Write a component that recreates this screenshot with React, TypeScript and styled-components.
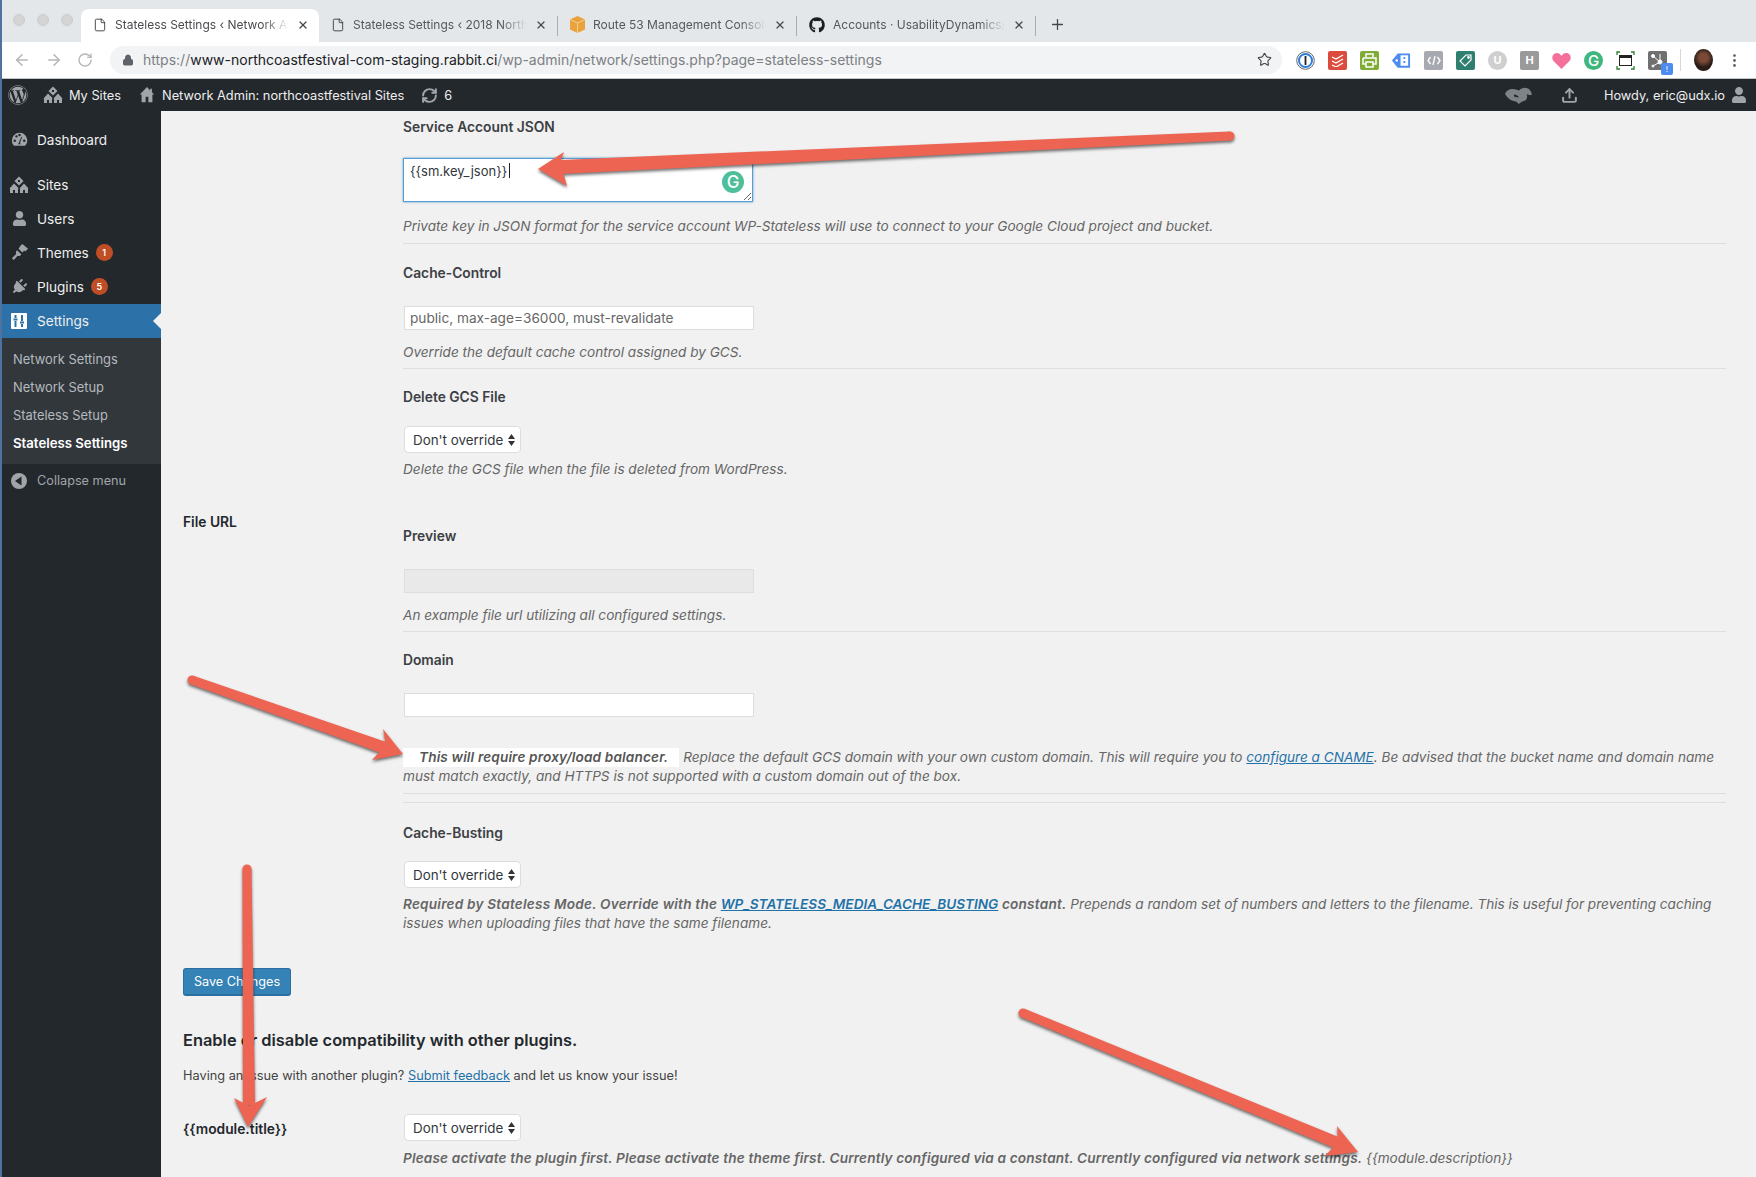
import React from 'react';
import styled, { createGlobalStyle } from 'styled-components';
import { FaWordpress, FaGithub, FaUser, FaPlug } from 'react-icons/fa';
import { ArrowLeft, ArrowRight, RotateCw, Lock, Star, X, Plus, File, RefreshCw, Upload, EllipsisVertical } from 'lucide-react';

const GlobalStyle = createGlobalStyle`
  html, body {
    margin: 0;
    padding: 0;
    background: #f1f1f1;
  }
  body {
    font-family: Inter, "Liberation Sans", sans-serif;
    font-size: 13px;
    color: #444;
  }
  * {
    box-sizing: border-box;
  }
`;

const Page = styled.div`
  position: relative;
  width: 1756px;
  height: 1177px;
  overflow: hidden;
  display: flex;
  flex-direction: column;
  border-left: 2px solid #4f73a0;
`;

/* browser chrome */

const TabStrip = styled.div`
  height: 42px;
  flex: none;
  display: flex;
  align-items: flex-end;
  padding-left: 79px;
  background: #e4e7ea;
  position: relative;
`;

const Lights = styled.div`
  position: absolute;
  left: 11px;
  top: 14px;
  display: flex;
  gap: 12px;
`;

const Light = styled.span`
  width: 12px;
  height: 12px;
  border-radius: 50%;
  background: #d4d4d4;
  border: 1px solid #cbcbcb;
`;

const Tab = styled.div<{ $active?: boolean }>`
  width: 238px;
  height: 33px;
  display: flex;
  align-items: center;
  gap: 8px;
  padding: 0 10px 2px 12px;
  font-size: 12px;
  color: ${(p) => (p.$active ? '#4a4c50' : '#55585c')};
  background: ${(p) => (p.$active ? '#fff' : 'transparent')};
  border-radius: 8px 8px 0 0;
  position: relative;
  svg {
    flex: none;
  }
`;

const TabTitle = styled.span`
  flex: 1;
  overflow: hidden;
  white-space: nowrap;
  -webkit-mask-image: linear-gradient(to right, #000 85%, transparent);
  mask-image: linear-gradient(to right, #000 85%, transparent);
`;

const TabDivider = styled.span`
  width: 1px;
  height: 20px;
  background: #a9acb0;
  align-self: center;
  margin-top: 9px;
  flex: none;
`;

const NewTab = styled.div`
  height: 33px;
  display: flex;
  align-items: center;
  margin-left: 13px;
  padding-bottom: 2px;
  color: #45484c;
`;

const Toolbar = styled.div`
  height: 37px;
  flex: none;
  display: flex;
  align-items: center;
  background: #fff;
  border-bottom: 1px solid #c4c6c8;
  padding-left: 11px;
`;

const NavButton = styled.span<{ $gap?: number }>`
  display: flex;
  width: 18px;
  margin-right: ${(p) => p.$gap ?? 14}px;
  color: #b4b6b9;
`;

const Omnibox = styled.div`
  width: 1172px;
  height: 28px;
  border-radius: 14px;
  background: #f1f3f4;
  display: flex;
  align-items: center;
  padding: 0 10px 1px 12px;
  font-size: 14px;
  color: #7d8084;
`;

const UrlText = styled.span`
  margin-left: 9px;
  flex: 1;
  white-space: nowrap;
`;

const UrlHost = styled.span`
  color: #202124;
`;

const Extensions = styled.div`
  display: flex;
  align-items: center;
  gap: 13px;
  margin-left: 14px;
  position: relative;
`;

const Ext = styled.span<{ $bg?: string; $round?: boolean; $color?: string; $big?: boolean }>`
  width: 19px;
  height: 19px;
  display: flex;
  align-items: center;
  justify-content: center;
  flex: none;
  border-radius: ${(p) => (p.$round ? '50%' : '2px')};
  background: ${(p) => p.$bg ?? 'transparent'};
  color: ${(p) => p.$color ?? '#fff'};
  font-size: ${(p) => (p.$big ? 15 : 11)}px;
  font-weight: ${(p) => (p.$big ? 500 : 700)};
  position: relative;
`;

const ExtBadge = styled.span`
  position: absolute;
  right: -6px;
  bottom: -5px;
  width: 12px;
  height: 12px;
  border-radius: 2px;
  background: #4d8bf0;
  color: #fff;
  font-size: 8px;
  font-weight: 400;
  text-align: center;
  line-height: 12px;
`;

const ToolDivider = styled.span`
  width: 1px;
  height: 22px;
  background: #d5d7d9;
`;

const Avatar = styled.span`
  width: 19px;
  height: 22px;
  border-radius: 50%;
  background: radial-gradient(circle at 50% 40%, #7a4a36 0 26%, #2a1c17 58%);
  flex: none;
`;

const MoreMenu = styled(EllipsisVertical)`
  color: #5f6368;
`;

/* admin bar */

const AdminBar = styled.div`
  height: 32px;
  flex: none;
  background: #23282d;
  color: #eee;
  display: flex;
  align-items: center;
  font-size: 12.800px;
  padding-left: 6px;
`;

const BarItem = styled.span<{ $gap?: number }>`
  display: flex;
  align-items: center;
  gap: 6px;
  margin-right: ${(p) => p.$gap ?? 0}px;
  color: #eee;
  white-space: nowrap;
  svg {
    color: #a0a5aa;
    flex: none;
  }
`;

const BarSpacer = styled.span`
  flex: 1;
`;

/* sidebar */

const Body = styled.div`
  flex: 1;
  display: flex;
  min-height: 0;
`;

const Sidebar = styled.nav`
  width: 159px;
  flex: none;
  background: #23282d;
  padding-top: 12px;
`;

const MenuItem = styled.div<{ $active?: boolean; $gapAfter?: boolean; $muted?: boolean }>`
  height: 34px;
  display: flex;
  align-items: center;
  padding: 0 0 1px 7px;
  gap: 8px;
  position: relative;
  color: ${(p) => (p.$muted ? '#a0a5aa' : '#eee')};
  background: ${(p) => (p.$active ? '#2c72a8' : 'transparent')};
  margin-bottom: ${(p) => (p.$gapAfter ? 11 : 0)}px;
  font-size: ${(p) => (p.$muted ? 12.7 : 13.6)}px;
  svg {
    color: ${(p) => (p.$active ? '#fff' : '#a0a5aa')};
  }
  ${(p) =>
    p.$active &&
    `&::after {
      content: '';
      position: absolute;
      right: 0;
      top: 9px;
      border: 8px solid transparent;
      border-right-color: #f1f1f1;
      border-left-width: 0;
    }`}
`;

const MenuIcon = styled.span`
  width: 20px;
  height: 20px;
  display: flex;
  align-items: center;
  justify-content: center;
  flex: none;
`;

const PlugIcon = styled(FaPlug)`
  transform: rotate(45deg);
`;

const Badge = styled.span`
  width: 17px;
  height: 17px;
  border-radius: 50%;
  background: #c04e24;
  color: #fff;
  font-size: 9px;
  font-weight: 600;
  text-align: center;
  line-height: 17px;
  margin-left: -1px;
`;

const SubMenu = styled.div`
  background: #32373c;
  padding: 7px 0;
`;

const SubItem = styled.div<{ $current?: boolean }>`
  height: 28px;
  line-height: 29px;
  padding-left: 11px;
  font-size: ${(p) => (p.$current ? 13.2 : 12.9)}px;
  color: ${(p) => (p.$current ? '#fff' : '#b4b9be')};
  font-weight: ${(p) => (p.$current ? 600 : 400)};
`;

/* content */

const Content = styled.main`
  flex: 1;
  padding: 6px 30px 0 22px;
`;

const Row = styled.div`
  display: grid;
  grid-template-columns: 220px 1fr;
`;

const RowHeading = styled.div<{ $mt?: number }>`
  font-size: 13.800px;
  font-weight: 600;
  line-height: 20px;
  color: #23282d;
  margin-top: ${(p) => p.$mt ?? 0}px;
`;

const FieldLabel = styled.div<{ $mt?: number }>`
  font-size: 13.800px;
  font-weight: 600;
  line-height: 20px;
  color: #3c4044;
  margin-top: ${(p) => p.$mt ?? 0}px;
`;

const TextAreaWrap = styled.div<{ $mt?: number }>`
  position: relative;
  width: 350px;
  height: 44px;
  margin-top: ${(p) => p.$mt ?? 0}px;
`;

const TextArea = styled.textarea`
  display: block;
  width: 350px;
  height: 44px;
  padding: 2px 6px;
  border: 1px solid #5b9dd9;
  box-shadow: 0 0 2px rgba(30, 140, 190, 0.8);
  font: 13px/20px Inter, sans-serif;
  color: #32373c;
  background: #fff;
  outline: none;
`;

const Caret = styled.span`
  position: absolute;
  left: 106px;
  top: 5px;
  width: 1px;
  height: 15px;
  background: #222;
`;

const GrammarlyDot = styled.span`
  position: absolute;
  right: 9px;
  bottom: 9px;
  width: 22px;
  height: 22px;
  border-radius: 50%;
  background: #4dbf9a;
  color: #fff;
  font-size: 17px;
  font-weight: 500;
  display: flex;
  align-items: center;
  justify-content: center;
`;

const TextInput = styled.input<{ $mt?: number; $disabled?: boolean }>`
  display: block;
  width: 350px;
  height: 24px;
  margin: ${(p) => p.$mt ?? 0}px 0 0 1px;
  padding: 0 5px;
  border: 1px solid #ddd;
  background: ${(p) => (p.$disabled ? '#e9e9e9' : '#fff')};
  font: 13.650px Inter, sans-serif;
  color: #666;
  outline: none;
`;

const Select = styled.select<{ $mt?: number }>`
  display: block;
  appearance: none;
  width: 117px;
  height: 27px;
  margin: ${(p) => p.$mt ?? 0}px 0 0 1px;
  padding: 0 0 0 8px;
  border: 1px solid #ddd;
  border-radius: 4px;
  font: 13.400px Inter, sans-serif;
  color: #32373c;
  background: #fff url("data:image/svg+xml,%3Csvg xmlns='http://www.w3.org/2000/svg' width='7' height='12'%3E%3Cpath d='M3.500 0 7 5H0zM0 7h7l-3.500 5z' fill='%23333'/%3E%3C/svg%3E") no-repeat right 5px center;
`;

const Desc = styled.p<{ $mt?: number }>`
  margin: ${(p) => p.$mt ?? 0}px 0 0;
  font-size: 13.600px;
  line-height: 19px;
  font-style: italic;
  color: #666;
  white-space: nowrap;
`;

const Strong = styled.strong<{ $tracking?: number }>`
  font-weight: 600;
  letter-spacing: ${(p) => p.$tracking ?? 0.16}px;
`;

const Notice = styled(Strong)`
  display: inline-block;
  background: #fff;
  padding: 0 11px 0 16px;
  color: #555;
`;

const DescLink = styled.a`
  color: #1f72a8;
  text-decoration: underline;
  letter-spacing: 0;
`;

const Rule = styled.hr<{ $mt?: number }>`
  margin: ${(p) => p.$mt ?? 0}px 0 0;
  border: none;
  border-top: 1px solid #dedede;
`;

const SaveButton = styled.button`
  display: block;
  margin-top: 35px;
  width: 108px;
  height: 28px;
  border: 1px solid #2a6f9f;
  border-bottom-width: 2px;
  border-radius: 3px;
  background: #3482b6;
  color: #fff;
  font: 12.700px Inter, sans-serif;
`;

const SectionTitle = styled.h2`
  margin: 34px 0 0;
  font-size: 16.400px;
  line-height: 20px;
  font-weight: 600;
  color: #23282d;
`;

const Intro = styled.p`
  margin: 16px 0 0;
  font-size: 12.770px;
  line-height: 20px;
  color: #444;
`;

const Annotations = styled.svg`
  position: absolute;
  left: -2px;
  top: 0;
  pointer-events: none;
  filter: drop-shadow(0 2px 1.500px rgba(0, 0, 0, 0.55));
`;

const DashIcon = () => (
  <svg width="19" height="19" viewBox="0 0 20 20" fill="currentColor">
    <path d="M10 3a8 8 0 0 0-8 8c0 2.200.9 4.200 2.300 5.700h11.400A8 8 0 0 0 10 3zM5 12.500a1.300 1.300 0 1 1 0-2.600 1.300 1.300 0 0 1 0 2.600zM6.800 8a1.300 1.300 0 1 1 0-2.600 1.300 1.300 0 0 1 0 2.600zM10 6.600a1.300 1.300 0 1 1 0-2.600 1.300 1.300 0 0 1 0 2.600zm1.400 8.400H8.600l.7-1.600L12 7l.8.300-2.300 6.500zM15 12.500a1.300 1.300 0 1 1 0-2.600 1.300 1.300 0 0 1 0 2.600z" fillRule="evenodd" />
  </svg>
);

const SitesIcon = ({ size = 20 }: { size?: number }) => (
  <svg width={size} height={size} viewBox="0 0 20 20" fill="currentColor">
    <path d="M10 1.500 14.500 6 10 10.500 5.500 6zM9 5v2h2V5z" fillRule="evenodd" />
    <path d="M5 8.500 9.500 13v.5H9V18H1v-4.500H.5zM4 15v3h2v-3zM15 8.500l4.500 5H19V18h-8v-4.500h-.5zM14 15v3h2v-3z" fillRule="evenodd" />
  </svg>
);

const HomeIcon = () => (
  <svg width="18" height="18" viewBox="0 0 20 20" fill="currentColor">
    <path d="M10 1 2 9.500h2V18h4.500v-6h3v6H16V9.500h2L15.500 7V3h-2v2z" />
  </svg>
);

const BrushIcon = () => (
  <svg width="19" height="19" viewBox="0 0 20 20" fill="currentColor">
    <path d="M11 3 13 1l6 5-3 3-1-1-2 2-4-4z" />
    <path d="M7.500 7.500 12 12l-1.500 1.500c-1 .5-2 .2-2.500 0L4 18l-2-2 4.500-4.500c-.4-1-.3-2 0-2.800z" />
  </svg>
);

const SlidersIcon = () => (
  <svg width="16" height="16" viewBox="0 0 16 16">
    <rect width="16" height="16" rx="1" fill="#fff" />
    <path d="M4.500 2v3M4.500 8v6M2.500 6.500h4M11 2v6M11 11v3M9 9.500h4" stroke="#2c72a8" strokeWidth="2" />
  </svg>
);

const CollapseIcon = () => (
  <svg width="18" height="18" viewBox="0 0 18 18">
    <circle cx="9" cy="9" r="8" fill="#a0a5aa" />
    <path d="M11.500 4.500v9L5 9z" fill="#23282d" />
  </svg>
);

const RabbitIcon = () => (
  <svg width="27" height="17" viewBox="0 0 27 17" fill="#7e8388">
    <path d="M0 7c1-3 4-5 8-5 2 0 4 .5 6 1.500C16 1 20 0 23 1.500c2 1 3.500 3.500 4 6-2 1-4 .5-5.500-.5 1 2 1 4-1 6.500-3 .5-5 2-7 3.500-1-2-3-3-5-3-3-.5-6-3-8.500-7z" />
    <path d="M9 7.500c2 0 4 1 5 3l-4-.5c-1-.5-1.200-1.500-1-2.500z" fill="#23282d" />
  </svg>
);

const CubeIcon = () => (
  <svg width="15" height="17" viewBox="0 0 15 17">
    <path d="M7.500 0 15 3.500v10L7.500 17 0 13.500v-10z" fill="#e8a33d" />
    <path d="M0 3.500 7.500 7 15 3.500M7.500 7v10" stroke="#f7d9a5" strokeWidth=".8" fill="none" />
  </svg>
);

const OnePassword = () => (
  <svg width="19" height="19" viewBox="0 0 19 19">
    <circle cx="9.500" cy="9.500" r="8.800" fill="#fff" stroke="#666" strokeWidth="1" />
    <circle cx="9.500" cy="9.500" r="6.500" fill="#fff" stroke="#2d7ed8" strokeWidth="2" />
    <rect x="8.600" y="5" width="1.800" height="9" fill="#222" />
  </svg>
);

const TodoistGlyph = () => (
  <svg width="13" height="13" viewBox="0 0 13 13" fill="none" stroke="#fff" strokeWidth="1.300">
    <path d="M1 3l4 2 7-4M1 7l4 2 7-4M1 11l4 2 7-4" />
  </svg>
);

const PrintGlyph = () => (
  <svg width="15" height="15" viewBox="0 0 15 15" fill="none" stroke="#fff" strokeWidth="1.500">
    <path d="M4 4V1h7v3M1 5h13v6h-3M1 5v6h3M4 9h7v5H4z" />
  </svg>
);

const TagBlue = () => (
  <svg width="20" height="19" viewBox="0 0 20 19">
    <path d="M6 2h13v15H6L0 9.500z" fill="#4d8bf0" />
    <path d="M9 4h8v11H9z" fill="#fff" />
    <path d="M12 6h2v2h-2zM12 10h2v2h-2z" fill="#4d8bf0" />
    <circle cx="5" cy="9.500" r="1.300" fill="#fff" />
  </svg>
);

const CodeGlyph = () => (
  <svg width="14" height="11" viewBox="0 0 14 11" fill="none" stroke="#fff" strokeWidth="1.300">
    <path d="M3.500 2 1 5.500 3.500 9M10.500 2 13 5.500 10.500 9M8 1 6 10" />
  </svg>
);

const TagGlyph = () => (
  <svg width="13" height="13" viewBox="0 0 13 13" fill="none" stroke="#fff" strokeWidth="1.200">
    <path d="M7 1h5v5l-6 6-5-5z" />
    <circle cx="9.500" cy="3.500" r=".8" />
  </svg>
);

const Heart = () => (
  <svg width="19" height="17" viewBox="0 0 19 17">
    <path d="M9.500 17 1.500 9C-1 6 .5 1 4.800 1c2 0 3.700 1.200 4.700 3 1-1.800 2.700-3 4.700-3C18.500 1 20 6 17.500 9z" fill="#f2709a" />
  </svg>
);

const Capture = () => (
  <svg width="19" height="19" viewBox="0 0 19 19" fill="none">
    <path d="M1 4V1h3M15 1h3v3M18 15v3h-3M4 18H1v-3" stroke="#2e7d32" strokeWidth="1.300" />
    <rect x="3.500" y="4.500" width="12" height="10" stroke="#222" />
    <rect x="3.500" y="4.500" width="12" height="2.500" fill="#222" />
  </svg>
);

const HubGlyph = () => (
  <svg width="15" height="15" viewBox="0 0 15 15" fill="#fff" stroke="#fff">
    <circle cx="3" cy="3" r="1.500" />
    <circle cx="10" cy="9" r="2" />
    <circle cx="3" cy="13" r="1" />
    <path d="M3 3l7 6M10 9l-7 4M10 9V1" fill="none" />
  </svg>
);

type ArrowProps = { tail: [number, number]; neck: [number, number]; head: string; tailW: number; neckW: number };

// shaft gets a bit thicker towards the head
const Arrow = ({ tail, neck, head, tailW, neckW }: ArrowProps) => {
  const dx = neck[0] - tail[0];
  const dy = neck[1] - tail[1];
  const len = Math.hypot(dx, dy);
  const nx = -dy / len;
  const ny = dx / len;
  const shaft = [
    [tail[0] + (nx * tailW) / 2, tail[1] + (ny * tailW) / 2],
    [neck[0] + (nx * neckW) / 2, neck[1] + (ny * neckW) / 2],
    [neck[0] - (nx * neckW) / 2, neck[1] - (ny * neckW) / 2],
    [tail[0] - (nx * tailW) / 2, tail[1] - (ny * tailW) / 2],
  ]
    .map((pt) => pt.join(','))
    .join(' ');
  return (
    <g fill="#ee6453">
      <circle cx={tail[0]} cy={tail[1]} r={tailW / 2} />
      <polygon points={shaft} />
      <polygon points={head} />
    </g>
  );
};

const tabs = [
  { title: 'Stateless Settings ‹ Network Admin', active: true, icon: <File size={14} strokeWidth={1.500} color="#333" /> },
  { title: 'Stateless Settings ‹ 2018 North Coast', icon: <File size={14} strokeWidth={1.500} color="#333" /> },
  { title: 'Route 53 Management Console', icon: <CubeIcon /> },
  { title: 'Accounts · UsabilityDynamics/wp', icon: <FaGithub size={16} color="#1b1f23" /> },
];

export default function App() {
  return (
    <Page>
      <GlobalStyle />
      <TabStrip>
        <Lights>
          <Light />
          <Light />
          <Light />
        </Lights>
        {tabs.map((tab, i) => (
          <React.Fragment key={tab.title}>
            {i > 1 && <TabDivider />}
            <Tab $active={tab.active}>
              {tab.icon}
              <TabTitle>{tab.title}</TabTitle>
              <X size={12} color="#45484c" strokeWidth={2.500} />
            </Tab>
          </React.Fragment>
        ))}
        <TabDivider />
        <NewTab>
          <Plus size={17} strokeWidth={1.800} />
        </NewTab>
      </TabStrip>

      <Toolbar>
        <NavButton>
          <ArrowLeft size={18} />
        </NavButton>
        <NavButton>
          <ArrowRight size={18} />
        </NavButton>
        <NavButton $gap={15}>
          <RotateCw size={16} />
        </NavButton>
        <Omnibox>
          <Lock size={12} color="#5f6368" fill="#5f6368" />
          <UrlText>
            https://<UrlHost>www-northcoastfestival-com-staging.rabbit.ci</UrlHost>/wp-admin/network/settings.php?page=stateless-settings
          </UrlText>
          <Star size={15} color="#45484c" strokeWidth={1.800} />
        </Omnibox>
        <Extensions>
          <Ext><OnePassword /></Ext>
          <Ext $bg="#db4c3f"><TodoistGlyph /></Ext>
          <Ext $bg="#7fab37"><PrintGlyph /></Ext>
          <Ext><TagBlue /></Ext>
          <Ext $bg="#a6a9b0"><CodeGlyph /></Ext>
          <Ext $bg="#2f7f6f"><TagGlyph /></Ext>
          <Ext $bg="#cfcfcf" $round>U</Ext>
          <Ext $bg="#9a9a9a">H</Ext>
          <Ext><Heart /></Ext>
          <Ext $bg="#3fb67d" $round $big>G</Ext>
          <Ext><Capture /></Ext>
          <Ext $bg="#707070"><HubGlyph /><ExtBadge>!</ExtBadge></Ext>
          <ToolDivider />
          <Avatar />
          <MoreMenu size={17} />
        </Extensions>
      </Toolbar>

      <AdminBar>
        <BarItem $gap={15}>
          <FaWordpress size={20} />
        </BarItem>
        <BarItem $gap={17}>
          <SitesIcon />
          My Sites
        </BarItem>
        <BarItem $gap={17}>
          <HomeIcon />
          Network Admin: northcoastfestival Sites
        </BarItem>
        <BarItem $gap={2}>
          <RefreshCw size={17} strokeWidth={2.800} />
          6
        </BarItem>
        <BarSpacer />
        <BarItem $gap={29}>
          <RabbitIcon />
        </BarItem>
        <BarItem $gap={26}>
          <Upload size={17} strokeWidth={2.800} />
        </BarItem>
        <BarItem $gap={9}>
          Howdy, eric@udx.io
          <FaUser size={16} />
        </BarItem>
      </AdminBar>

      <Body>
        <Sidebar>
          <MenuItem $gapAfter>
            <MenuIcon><DashIcon /></MenuIcon>
            Dashboard
          </MenuItem>
          <MenuItem>
            <MenuIcon><SitesIcon /></MenuIcon>
            Sites
          </MenuItem>
          <MenuItem>
            <MenuIcon><FaUser size={15} /></MenuIcon>
            Users
          </MenuItem>
          <MenuItem>
            <MenuIcon><BrushIcon /></MenuIcon>
            Themes
            <Badge>1</Badge>
          </MenuItem>
          <MenuItem>
            <MenuIcon><PlugIcon size={16} /></MenuIcon>
            Plugins
            <Badge>5</Badge>
          </MenuItem>
          <MenuItem $active>
            <MenuIcon><SlidersIcon /></MenuIcon>
            Settings
          </MenuItem>
          <SubMenu>
            <SubItem>Network Settings</SubItem>
            <SubItem>Network Setup</SubItem>
            <SubItem>Stateless Setup</SubItem>
            <SubItem $current>Stateless Settings</SubItem>
          </SubMenu>
          <MenuItem $muted>
            <MenuIcon><CollapseIcon /></MenuIcon>
            Collapse menu
          </MenuItem>
        </Sidebar>

        <Content>
          <Row>
            <div />
            <div>
              <FieldLabel>Service Account JSON</FieldLabel>
              <TextAreaWrap $mt={21}>
                <TextArea defaultValue="{{sm.key_json}}" />
                <Caret />
                <GrammarlyDot>G</GrammarlyDot>
              </TextAreaWrap>
              <Desc $mt={15}>Private key in JSON format for the service account WP-Stateless will use to connect to your Google Cloud project and bucket.</Desc>
              <Rule $mt={7} />

              <FieldLabel $mt={19}>Cache-Control</FieldLabel>
              <TextInput $mt={23} defaultValue="public, max-age=36000, must-revalidate" />
              <Desc $mt={13}>Override the default cache control assigned by GCS.</Desc>
              <Rule $mt={6} />

              <FieldLabel $mt={18}>Delete GCS File</FieldLabel>
              <Select $mt={19}>
                <option>Don't override</option>
              </Select>
              <Desc $mt={7}>Delete the GCS file when the file is deleted from WordPress.</Desc>
            </div>
          </Row>

          <Row>
            <RowHeading $mt={33}>File URL</RowHeading>
            <div>
              <FieldLabel $mt={47}>Preview</FieldLabel>
              <TextInput $mt={23} $disabled />
              <Desc $mt={13}>An example file url utilizing all configured settings.</Desc>
              <Rule $mt={6} />

              <FieldLabel $mt={18}>Domain</FieldLabel>
              <TextInput $mt={23} />
              <Desc $mt={31}>
                <Notice>This will require proxy/load balancer.</Notice> Replace the default GCS domain with your own custom domain. This will require you to <DescLink>configure a CNAME</DescLink>. Be advised that the bucket name and domain name
                <br />
                must match exactly, and HTTPS is not supported with a custom domain out of the box.
              </Desc>
              <Rule $mt={7} />
              <Rule $mt={8} />

              <FieldLabel $mt={20}>Cache-Busting</FieldLabel>
              <Select $mt={18}>
                <option>Don't override</option>
              </Select>
              <Desc $mt={7}>
                <Strong $tracking={0.22}>Required by Stateless Mode. Override with the <DescLink>WP_STATELESS_MEDIA_CACHE_BUSTING</DescLink> constant.</Strong> Prepends a random set of numbers and letters to the filename. This is useful for preventing caching
                <br />
                issues when uploading files that have the same filename.
              </Desc>
            </div>
          </Row>

          <SaveButton>Save Changes</SaveButton>
          <SectionTitle>Enable or disable compatibility with other plugins.</SectionTitle>
          <Intro>
            Having an issue with another plugin? <DescLink>Submit feedback</DescLink> and let us know your issue!
          </Intro>

          <Row>
            <RowHeading $mt={33}>{'{{module.title}}'}</RowHeading>
            <div>
              <Select $mt={28}>
                <option>Don't override</option>
              </Select>
              <Desc $mt={8}>
                <Strong>Please activate the plugin first. Please activate the theme first. Currently configured via a constant. Currently configured via network settings.</Strong> {'{{module.description}}'}
              </Desc>
            </div>
          </Row>
        </Content>
      </Body>

      <Annotations width="1756" height="1177" viewBox="0 0 1756 1177">
        <Arrow tail={[1230, 136]} neck={[560, 167]} head="538,169 564,152 560,162 567,186" tailW={9} neckW={14} />
        <Arrow tail={[192, 680]} neck={[385, 748]} head="403,754 383,729 386,745 372,760" tailW={9} neckW={12} />
        <Arrow tail={[247, 869]} neck={[249, 1105]} head="248,1127 234,1098 249,1106 267,1097" tailW={9} neckW={12} />
        <Arrow tail={[1023, 1013]} neck={[1340, 1144]} head="1358,1152 1337,1126 1338,1142 1325,1156" tailW={9} neckW={12} />
      </Annotations>
    </Page>
  );
}
